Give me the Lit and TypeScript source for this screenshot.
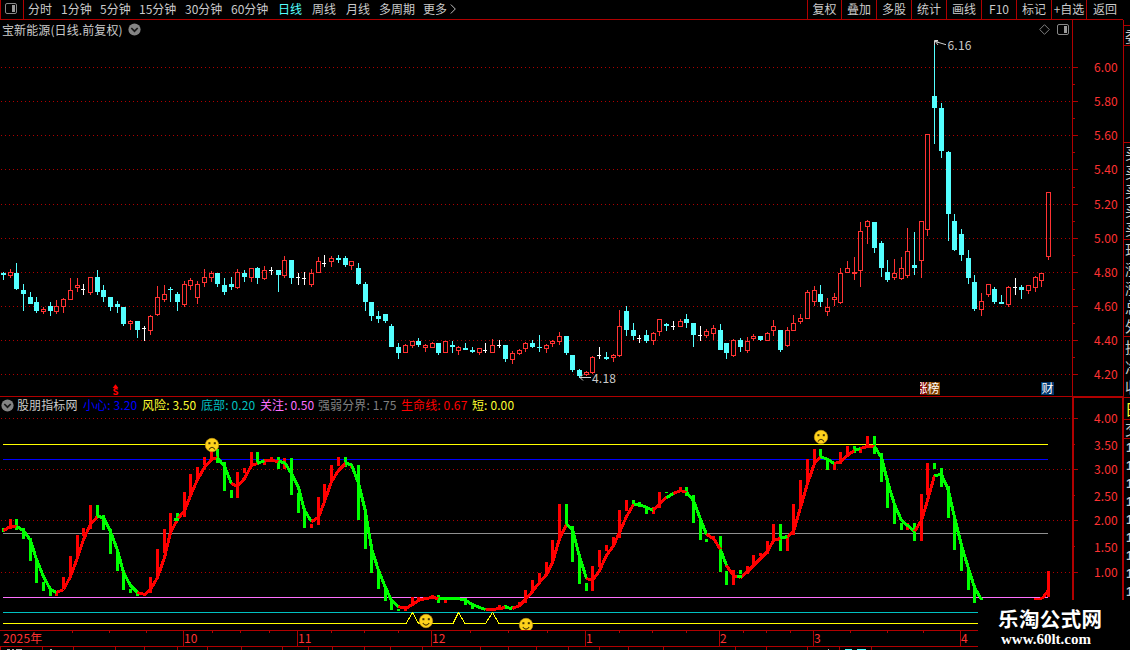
import { LitElement, html, svg, css } from "lit";
import { customElement } from "lit/decorators.js";

const barX = (i: number) => Math.floor(3.35 + 6.7 * i);

// Each candle: kind (r rising, c falling, w unchanged), wick top, body top, body bottom, wick bottom.
const CANDLES = `c272,273,275,280 r269,272,276,278 c263,273,289,290 c284,290,294,311 c292,297,304,304 c297,302,311,313 r307,309,312,314 c302,306,311,316 r300,306,312,314 r298,299,307,313
r278,290,300,300 r278,285,288,292 w284,289,290,295 r277,277,293,295 c270,277,292,295 c285,290,297,302 c297,297,307,311 c301,304,307,313 c307,307,324,326 r320,321,324,330
c321,321,330,338 w326,328,329,341 r315,316,331,335 r286,297,315,316 r285,294,300,302 c287,289,290,302 c292,294,302,311 r281,284,305,307 r278,280,286,290 r281,284,298,304
r269,277,283,287 r271,273,278,282 c273,273,284,287 c278,285,292,295 c277,284,287,290 r269,272,288,289 c270,273,277,282 r268,268,278,282 c267,268,278,284 r266,270,279,280
w267,270,271,275 c270,270,275,292 r256,260,276,278 c260,260,278,284 w273,277,278,285 w272,278,279,285 r269,273,285,287 r257,261,273,273 w255,263,264,267 r256,258,262,267
c255,258,260,263 c256,258,265,267 r261,261,266,270 c263,268,284,285 c282,284,302,311 c302,302,316,321 c311,316,319,323 c314,314,321,323 c324,326,347,347 c343,347,353,359
r344,345,353,353 r341,341,346,348 c338,341,345,347 r344,345,348,352 r342,343,348,348 c343,343,353,355 r341,341,353,353 c341,345,347,353 r346,347,351,355 c343,348,350,350
c347,350,352,353 r348,348,353,355 w343,350,351,353 r339,345,353,353 w340,345,346,348 c345,345,359,362 r351,353,360,364 r349,350,354,355 r342,343,349,352 c340,343,347,348
c335,347,348,352 r344,345,349,353 r340,341,344,347 r332,336,342,345 c336,336,353,355 c355,355,370,372 c369,370,376,378 r371,372,375,376 r356,357,373,374 w347,355,356,359
c352,357,359,360 r354,355,358,362 r310,326,356,357 c306,311,330,336 c323,330,336,340 w335,338,339,343 c330,335,341,343 r332,333,341,345 r319,319,332,336 c323,324,326,331
w321,326,327,330 r319,321,327,327 c314,319,323,328 c323,323,335,347 w326,335,336,341 r329,331,336,338 r325,328,334,340 c324,330,350,350 c343,343,353,359 r339,340,356,357
c338,340,347,352 r337,341,351,353 r334,336,339,341 c336,336,340,341 r332,333,341,341 r320,326,331,336 c330,330,350,352 r327,330,346,347 r315,323,331,331 r314,318,322,324
r290,292,319,319 r286,290,302,306 c285,294,302,307 r298,307,312,316 r293,297,300,306 r268,273,303,304 r261,268,273,273 r257,272,274,280 r222,231,271,287 r220,221,227,244
c222,222,248,253 c241,243,268,277 c260,272,280,282 r259,273,278,280 r257,268,279,280 r228,251,276,278 c232,265,268,275 r221,221,261,278 r134,134,230,236 c43,96,108,144
c103,108,151,158 c151,152,214,241 c214,221,250,251 c229,234,255,261 c250,258,278,284 c275,282,309,311 r293,301,310,316 r284,284,295,297 c287,289,302,304 c295,302,304,304
r286,287,305,307 w278,287,288,295 c285,287,290,299 r285,285,291,294 r276,277,288,292 r273,273,281,287 r192,192,257,260`
  .split(/\s+/)
  .map((s) => ({ kind: s[0], v: s.slice(1).split(",").map(Number) }));

// Oscillator bars: colour, top, bottom, then line value and line colour.
const OSC = `g528,532,530g r519,529,526r g519,530,526r g528,539,530g g538,561,540g g558,583,559g g582,591,576g g590,596,589g r592,596,592g r577,589,589r
r556,578,576r r535,557,557r r528,536,539r r505,529,524r g505,518,516r g515,530,517g g529,554,531g g551,571,550g g570,590,572g g589,593,585g
g592,596,592g r593,596,594r r577,593,589r r549,578,577r r529,553,557r r513,532,532r g513,520,519r r492,517,510r r474,496,495r r467,479,479r
r457,465,467r r450,459,459r g449,463,457r g462,491,466g g490,498,483g r472,498,486r r468,473,478r r452,466,465r g452,465,463r r459,465,460g
r457,462,460r g457,469,461r r458,469,462g g458,495,473g g493,513,487g g510,528,510g r524,528,521g r497,525,517r r484,500,501r r465,483,481r
r457,466,470r g457,467,463r r465,468,464g g465,520,483g g515,549,511g g544,573,548g g572,589,570g g587,601,587g g600,610,600g g609,611,606g
r606,611,608r r597,606,604r r597,601,600r r597,599,598r r595,597,597r g595,603,598r r599,603,598g g597,599,598g g597,599,598g g598,605,600g
g604,609,604g g606,608,607g r608,610,609g r608,610,609r r605,609,608r g605,609,607r g606,608,608g r602,607,605r r590,603,599r r580,593,591r
r573,583,582r r562,575,574r r540,563,562r r504,541,538r g504,525,524r g526,562,529g g555,584,556g g583,591,578g r566,591,580r r550,567,570r
r545,551,555r r537,544,545r r510,538,532r r500,511,516r g500,505,504r g502,507,504g g506,514,507g r507,514,510g r492,508,503r g492,493,497r
g492,494,493g r487,492,490r g487,496,492r g495,523,500g g521,540,519g g539,542,534g r536,539,538r g536,572,549r g571,585,565g r570,585,575r
g570,574,577r g566,574,571r r555,567,565r r553,556,558r r541,554,551r r524,541,540r g524,551,538r r536,551,536g r504,535,531r r480,509,507r
r459,484,483r r449,463,463r g449,457,456r g459,470,459g r463,470,463g r452,464,461r r446,456,455r g446,453,450r r447,453,448g r436,448,446r
g436,454,446r g453,482,457g g478,508,481g g503,524,504g g523,530,520g r523,530,525g g523,541,531g r494,541,520r r463,495,500r g463,469,475r
g468,487,474g g486,518,490g g515,550,517g g547,571,545g g567,590,568g g585,603,587g g598,600,599g`
  .split(/\s+/)
  .map((s) => ({
    bar: s[0] === "g" ? "g" : "r",
    line: s[s.length - 1],
    v: s.slice(1, -1).split(",").map(Number),
  }));

// Bars that keep the rising colour although the entry before them falls.
for (const i of [111]) OSC[i].bar = "r";

const GRID_MAIN = [67, 101, 135, 169, 204, 238, 272, 306, 340, 374];
const GRID_OSC = [418, 469, 520, 572];
const PRICES = ["6.00", "5.80", "5.60", "5.40", "5.20", "5.00", "4.80", "4.60", "4.40", "4.20"];
const OSC_LABELS: [string, number][] = [
  ["4.00", 419], ["3.50", 446], ["3.00", 470], ["2.50", 497], ["2.00", 521], ["1.50", 548], ["1.00", 573],
];
const MONTHS: [string, number][] = [["10", 183], ["11", 297], ["12", 431], ["1", 585], ["2", 719], ["3", 813], ["4", 960]];
const TICKS = [72, 109, 146, 212, 240, 269, 331, 364, 398, 470, 508, 547, 619, 652, 686, 743, 766, 790, 850, 887, 923];
const FOOT_TICKS = [0, 42, 73, 115, 144, 177, 207, 241, 282, 308, 332, 364, 390, 422, 480, 508, 536, 568, 599, 628, 663, 735, 766, 807, 839, 871];

const dots = (y: number) => svg`<line class="dots" x1="1" x2="1071" y1=${y + 0.5} y2=${y + 0.5} />`;

const candle = (c: { kind: string; v: number[] }, i: number) => {
  const x = barX(i);
  const [h, t, b, l] = c.v;
  if (c.kind === "r")
    return svg`<g class="up"><rect class="wick" x=${x} y=${h} width="1" height=${t - h} /><rect class="wick" x=${x} y=${b} width="1" height=${l - b} /><rect class="hollow" x=${x - 1.5} y=${t + 0.5} width="4" height=${b - t - 1} /></g>`;
  return svg`<g class=${c.kind === "c" ? "down" : "flat"}><rect x=${x} y=${h} width="1" height=${l - h} /><rect x=${x - 2} y=${t} width=${c.kind === "c" ? 5 : 4} height=${b - t} /></g>`;
};

const face = (x: number, y: number, happy: boolean) => svg`
  <circle cx=${x} cy=${y} r="6.7" fill="#ffd21c" stroke="#c99a10" stroke-width=".7" />
  <rect x=${x - 3.6} y=${y - 2.8} width="2" height="2" fill="#403000" />
  <rect x=${x + 1.8} y=${y - 2.8} width="2" height="2" fill="#403000" />
  <path d=${happy ? `M${x - 3.2} ${y + 2}q3.2 4.2 6.4 0` : `M${x - 3} ${y + 4.5}q3 -4.6 6 0`} fill="none" stroke="#403000" stroke-width="1.1" />`;

const chevron = html`<svg class="chev" width="13" height="13" viewBox="0 0 13 13">
  <circle cx="6.5" cy="6.5" r="6.1" /><path d="M3.3 5 6.5 8.2 9.7 5" />
</svg>`;

const panelIcon = html`<svg class="panel" width="13" height="11" viewBox="0 0 13 11">
  <rect class="frame" x=".5" y=".5" width="11" height="10" rx="1.5" />
  <rect class="fill" x="7" y="2" width="3" height="7" />
</svg>`;

@customElement("app-root")
export class AppRoot extends LitElement {
  static styles = css`
    :host {
      display: flex;
      flex-direction: column;
      position: relative;
      width: 1130px;
      height: 650px;
      overflow: hidden;
      background: #000;
      color: #cacaca;
      font: 12px/18px "Noto Sans CJK SC", sans-serif;
      white-space: nowrap;
    }
    svg { display: block; overflow: visible; }
    .clip { overflow: hidden; }
    .toolbar { display: flex; height: 20px; }
    .tools { display: flex; width: 1123px; border-bottom: 1px solid #b00000; box-sizing: border-box; height: 20px; }
    .switch { width: 24px; box-sizing: border-box; border: solid #b00000; border-width: 0 1px; padding: 3px 0 0 4px; }
    .periods {
      display: grid;
      grid-template-columns: 33px 39px 39px 46px 46px 47px 34px 34px 33px 44px 27px 12px;
      margin-left: 4px;
    }
    .active { color: #54ffff; }
    .more { padding-top: 4px; }
    .more path { fill: none; stroke: #c0c0c0; }
    .actions { display: grid; grid-template-columns: 34px repeat(7, 35px) 37px; margin-left: auto; }
    .actions span { border-left: 1px solid #b00000; text-align: center; }
    .main { display: grid; grid-template-columns: 1072px 51px 7px; height: 630px; }
    .title { display: flex; align-items: center; height: 19px; padding-left: 2px; gap: 5px; letter-spacing: 0.1px; }
    .corner { display: flex; gap: 7px; margin-left: auto; padding-right: 2px; }
    .chev circle { fill: #848484; }
    .chev path { fill: none; stroke: #181818; stroke-width: 1.7; }
    .panel .frame { fill: none; stroke: #888; }
    .panel .fill { fill: #999; }
    .legend {
      display: grid;
      grid-template-columns: 15px 66px 59px 59px 59px 58px 83px 71px 50px;
      padding-left: 2px;
      line-height: 16px;
      letter-spacing: 0.12px;
      border-top: 1px solid #b00000;
      box-sizing: border-box;
      height: 18px;
    }
    .legend .chev { margin: 2px 0 0 -1px; }
    .blue { color: #0000ff; }
    .yellow { color: #ffff30; }
    .teal { color: #00c0c0; }
    .pink { color: #ff70ff; }
    .gray { color: #808080; }
    .red { color: #ff0000; }
    .crisp { shape-rendering: crispEdges; }
    .dots { stroke: #b00000; stroke-dasharray: 1 3; }
    .up .wick { fill: #ff3232; }
    .up .hollow { fill: none; stroke: #ff3232; }
    .down { fill: #54ffff; }
    .flat { fill: #fff; }
    .g { fill: #00ff00; }
    .r { fill: #ff0000; }
    .lg { stroke: #00ff00; stroke-width: 3; }
    .lr { stroke: #ff0000; stroke-width: 3; }
    .label { fill: #cacaca; letter-spacing: 0.2px; }
    .axis text, .time text { fill: #ff3232; letter-spacing: 0.15px; }
    .edge { fill: #b00000; }
    .arrow { fill: none; stroke: #d0d0d0; }
    .badge { fill: #fff; font-size: 12px; }
    .quote {
      display: grid;
      grid-template-rows: 6px 20px 97px 97px 97px 61px 22px 19px 211px;
      overflow: hidden;
      font-size: 15px;
      border-left: 1px solid #b00000;
    }
    .quote div {
      display: flex;
      flex-direction: column;
      justify-content: space-around;
      min-height: 0;
      box-sizing: border-box;
      border-bottom: 1px solid #b00000;
      padding-left: 1px;
      line-height: 18px;
    }
    .quote .ones { justify-content: flex-start; font: 700 13px/18px "Liberation Sans", sans-serif; border: 0; padding: 0 0 0 2px; }
    .mark { position: absolute; left: 978px; top: 600px; width: 152px; height: 50px; background: #000; }
    .mark text { fill: #fff; }
    .mark .cn { font: 700 20.5px "Noto Sans CJK SC", sans-serif; }
    .mark .site { font: 700 15px "Liberation Serif", serif; }
  `;

  private toolbar() {
    const periods = ["分时", "1分钟", "5分钟", "15分钟", "30分钟", "60分钟", "日线", "周线", "月线", "多周期", "更多"];
    const actions = ["复权", "叠加", "多股", "统计", "画线", "F10", "标记", "+自选", "返回"];
    return html`<div class="toolbar"><div class="tools">
      <div class="switch">${panelIcon}</div>
      <div class="periods">
        ${periods.map((p) => html`<span class=${p === "日线" ? "active" : ""}>${p}</span>`)}
        <svg class="more" width="7" height="10" viewBox="0 0 7 10"><path d="M.8 .5 5.3 5 .8 9.5" /></svg>
      </div>
      <div class="actions">${actions.map((a) => html`<span>${a}</span>`)}</div>
    </div></div>`;
  }

  private price() {
    return html`<svg width="1072" height="357" viewBox="0 39 1072 357">
      <g class="crisp">${GRID_MAIN.map(dots)}${CANDLES.map(candle)}</g>
      <path class="arrow" d="M934.5 45V40.5H938M935 41l4 1.5M937 42l9 2.7M935 41l3 4" />
      <text class="label" x="947.5" y="50">6.16</text>
      <path class="arrow" d="M591 377.5H580M583 374.5l-3 3 3 3" />
      <text class="label" x="592" y="383">4.18</text>
      <path d="M112.6 388 115.5 384.2 118.4 388z" fill="#f00" />
      <text x="112.5" y="395" fill="#f00" font-size="9.5" font-weight="700">S</text>
      <rect x="920" y="382" width="8" height="13" fill="#800000" />
      <svg class="clip" x="920" y="380" width="7" height="16"><text class="badge" x="-4" y="13">涨</text></svg>
      <rect x="927" y="382" width="13" height="13" fill="#804000" />
      <text class="badge" x="927.5" y="393">榜</text>
      <rect x="1041" y="382" width="13" height="13" fill="#003870" />
      <text class="badge" x="1041.5" y="393">财</text>
    </svg>`;
  }

  private oscillator() {
    const line = (y: number, color: string, end = 1048) =>
      svg`<rect x="3" y=${y} width=${end - 3} height="1" fill=${color} />`;
    return html`<svg class="clip" width="1072" height="216" viewBox="0 414 1072 216">
      <g class="crisp">
        ${GRID_OSC.map(dots)}
        ${line(444, "#ffff00")}${line(459, "#0000ff")}${line(533, "#909090")}${line(597, "#ff70ff")}${line(612, "#00c0c0", 978)}
        <path d="M3 623.5H406L412.5 612.5 418.5 623.5H453L458.5 612.5 465 623.5H485.5L492.5 612.5 499 623.5H978" fill="none" stroke="#ffff00" />
        ${OSC.map((o, i) => svg`<rect class=${o.bar} x=${barX(i) - 1} y=${o.v[0]} width="3" height=${o.v[1] - o.v[0]} />`)}
        ${OSC.map((o, i) =>
          i === 0
            ? svg``
            : svg`<line class=${"l" + o.line} x1=${barX(i - 1) + 0.5} y1=${OSC[i - 1].v[2] + 0.5} x2=${barX(i) + 0.5} y2=${o.v[2] + 0.5} />`
        )}
        <rect class="g" x="174" y="518" width="5" height="3" />
        <rect class="g" x="737" y="575" width="5" height="3" />
        <rect class="r" x="1047" y="571" width="3" height="26" />
        <path d="M1034 599.5H1039L1043 597.5 1048.5 590" class="lr" fill="none" />
      </g>
      ${face(212, 445, false)}${face(821, 437, false)}${face(426, 621, true)}${face(526, 625, true)}
    </svg>`;
  }

  private time() {
    return html`<svg class="time" width="1072" height="20" viewBox="0 630 1072 20">
      <g class="edge crisp">
        <rect x="0" y="630" width="1072" height="1" />
        <rect x="0" y="646" width="1072" height="1" />
        ${TICKS.map((x) => svg`<rect x=${x} y="631" width="1" height="2" />`)}
        ${FOOT_TICKS.map((x) => svg`<rect x=${x} y="647" width="1" height="3" />`)}
        ${MONTHS.map((m) => svg`<rect x=${m[1]} y="631" width="1" height="15" />`)}
      </g>
      <text x="3" y="643">2025年</text>
      ${MONTHS.map((m) => svg`<text x=${m[1] + 1} y="643">${m[0]}</text>`)}
      <g class="crisp" fill="#b0b0b0">
        <rect x="7" y="649" width="3" height="1" /><rect x="12" y="649" width="2" height="1" />
        <rect x="16" y="649" width="6" height="1" /><rect x="50" y="649" width="2" height="1" />
        <rect x="828" y="649" width="1" height="1" />
        <rect x="845" y="649" width="7" height="1" fill="#54ffff" /><rect x="857" y="649" width="9" height="1" fill="#54ffff" />
      </g>
    </svg>`;
  }

  private axis() {
    return html`<svg class="axis" width="51" height="630" viewBox="1072 20 51 630">
      <g class="edge crisp">
        <rect x="1072" y="20" width="1" height="376" />
        <rect x="1072" y="396" width="2" height="204" />
        <rect x="1072" y="396" width="51" height="2" />
        <rect x="1122" y="396" width="1" height="204" />
        ${[...GRID_MAIN, ...GRID_OSC].map((y) => svg`<rect x="1073" y=${y} width="5" height="1" />`)}
        ${[84, 118, 152, 187, 221, 255, 289, 323, 357, 444, 495, 546].map((y) => svg`<rect x="1073" y=${y} width="2" height="1" />`)}
      </g>
      ${PRICES.map((p, i) => svg`<text x="1094" y=${GRID_MAIN[i] + 5}>${p}</text>`)}
      ${OSC_LABELS.map(([t, y]) => svg`<text x="1094" y=${y + 4}>${t}</text>`)}
    </svg>`;
  }

  private quote() {
    const col = (s: string) => [...s].map((c) => html`<span>${c}</span>`);
    return html`<div class="quote">
      <div></div><div>委</div><div></div><div>${col("买买买买买")}</div><div>${col("现涨涨总外")}</div>
      <div>${col("换净收")}</div><div class="yellow">日</div><div>交</div>
      <div class="ones">${col("111111111")}</div>
    </div>`;
  }

  render() {
    return html`
      ${this.toolbar()}
      <div class="main">
        <div>
          <div class="title">
            <span>宝新能源(日线.前复权)</span>${chevron}
            <div class="corner">
              <svg width="11" height="11" viewBox="0 0 11 11"><path d="M5.5 .7 10.3 5.5 5.5 10.3 .7 5.5z" fill="none" stroke="#808080" /></svg>
              ${panelIcon}
            </div>
          </div>
          ${this.price()}
          <div class="legend">
            ${chevron}<span>股朋指标网</span><span class="blue">小心: 3.20</span><span class="yellow">风险: 3.50</span>
            <span class="teal">底部: 0.20</span><span class="pink">关注: 0.50</span><span class="gray">强弱分界: 1.75</span>
            <span class="red">生命线: 0.67</span><span class="yellow">短: 0.00</span>
          </div>
          ${this.oscillator()}${this.time()}
        </div>
        ${this.axis()}${this.quote()}
      </div>
      <svg class="mark" viewBox="978 600 152 50">
        <text class="cn" x="998" y="626.5" textLength="104">乐淘公式网</text>
        <text class="site" x="1001" y="644" textLength="90" lengthAdjust="spacingAndGlyphs">www.60lt.com</text>
      </svg>
    `;
  }
}
